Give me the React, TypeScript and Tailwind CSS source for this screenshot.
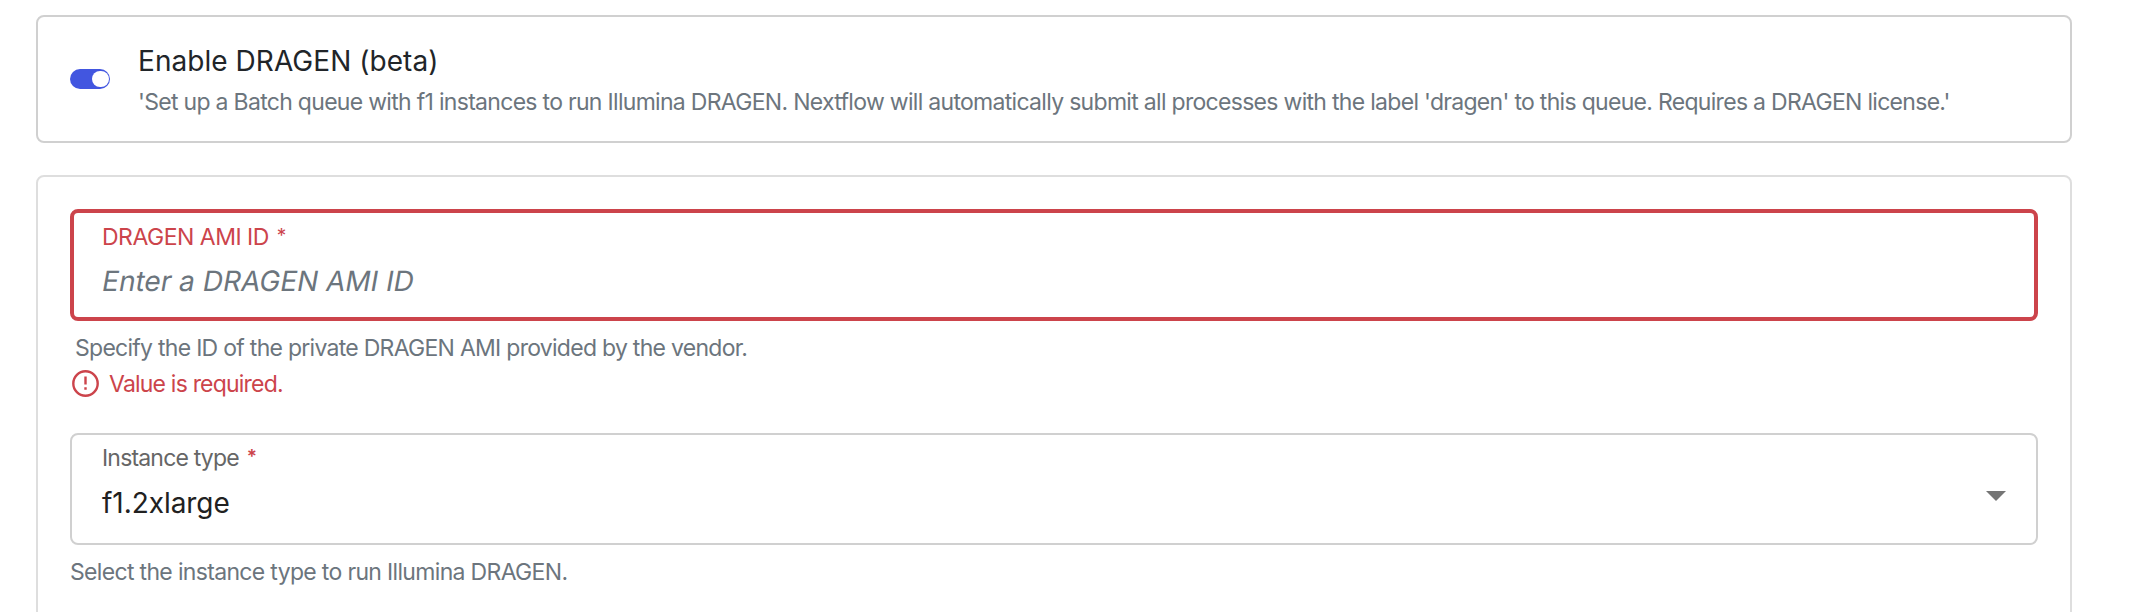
import React from "react";

function Toggle() {
  return (
    <button type="button" role="switch" aria-checked="true" className="flex h-5 w-10 items-center justify-end rounded-full bg-[#4256e0] pr-[1.5px]">
      <span className="block size-[16.5px] rounded-full bg-white" />
    </button>
  );
}

function ErrorIcon() {
  return (
    <svg className="mt-[2px] size-[27px] shrink-0" viewBox="0 0 27 27" fill="none" stroke="#cc444b">
      <circle cx="13.5" cy="13.5" r="12.2" strokeWidth="2.4" />
      <path d="M13.5 6.4v8M13.5 17.2v2.6" strokeWidth="2.4" />
    </svg>
  );
}

export default function App() {
  return (
    <main className="flex h-[612px] w-full flex-col gap-8 overflow-hidden bg-white pl-9 pr-16 pt-[15px] font-['Inter','Liberation_Sans',sans-serif] whitespace-nowrap">
      <section className="flex h-32 shrink-0 rounded-lg border-2 border-[#d0d0d0] pl-8">
        <div className="pt-[52px]">
          <Toggle />
        </div>
        <div className="flex flex-col gap-[7px] pl-7 pt-[26px]">
          <h2 className="text-[28px] leading-9 tracking-[0.05px] text-[#212529]">Enable DRAGEN (beta)</h2>
          <p className="text-[23px] leading-8 font-[430] tracking-[-0.7px] text-[#6c757d]">
            'Set up a Batch queue with f1 instances to run Illumina DRAGEN. Nextflow will automatically submit all processes with the label 'dragen' to this queue. Requires a DRAGEN license.'
          </p>
        </div>
      </section>
      <section className="flex h-[500px] shrink-0 flex-col rounded-lg border-2 border-[#dedede] px-8 pt-8">
        <div className="flex h-28 shrink-0 flex-col items-start rounded-lg border-4 border-[#cc444b] pl-7 pt-[7px]">
          <label className="flex gap-[8px] pt-px text-[23px] leading-8 font-[430] tracking-[-0.5px] text-[#cc444b]">
            DRAGEN AMI ID <span className="text-[19px] leading-[30px]">*</span>
          </label>
          <span className="-ml-px mt-[10px] origin-[0_75%] -skew-x-[10deg] text-[28px] leading-9 text-[#6c757d]">Enter a DRAGEN AMI ID</span>
        </div>
        <p className="mt-[11px] pl-[5px] text-[23px] leading-8 font-[430] tracking-[-0.725px] text-[#6c757d]">
          Specify the ID of the private DRAGEN AMI provided by the vendor.
        </p>
        <div className="mt-1 flex gap-[10px] pl-[2px] text-[23px] leading-8 font-[430] tracking-[-0.8px] text-[#cc444b]">
          <ErrorIcon />
          <span>Value is required.</span>
        </div>
        <div className="mt-[33px] flex h-28 shrink-0 items-center justify-between rounded-lg border-2 border-[#d0d0d0] pl-[30px] pr-[30px]">
          <div className="flex h-full flex-col pt-[6px]">
            <label className="flex gap-[8px] pt-px text-[23px] leading-8 font-[430] tracking-[-0.82px] text-[#666666]">
              Instance type <span className="text-[19px] leading-[30px] font-semibold text-[#cc444b]">*</span>
            </label>
            <span className="mt-[11px] text-[28px] leading-9 tracking-[-0.05px] text-[#212121]">f1.2xlarge</span>
          </div>
          <svg className="mt-[14px] h-[10px] w-5" viewBox="0 0 20 10">
            <path d="M0 0h20L10 10z" fill="#757575" />
          </svg>
        </div>
        <p className="mt-[11px] text-[23px] leading-8 font-[430] tracking-[-0.67px] text-[#6c757d]">Select the instance type to run Illumina DRAGEN.</p>
      </section>
    </main>
  );
}
